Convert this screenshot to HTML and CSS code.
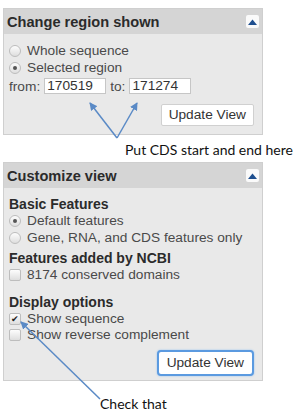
FILE: index.html
```html
<!DOCTYPE html>
<html lang="en">
<head>
    <meta charset="UTF-8">
    <meta name="viewport" content="width=device-width, initial-scale=1.0">
    <title>Sequence viewer settings</title>
    <link rel="stylesheet" href="styles.css">
</head>
<body>
    <div class="page">
        <section class="panel panel-region">
            <div class="panel-head">
                <h3>Change region shown</h3>
                <span class="toggle"><svg width="9" height="6" viewBox="0 0 9 6"><path d="M0 6 L4.5 0.5 L9 6 Z" fill="#1f4f8f"/></svg></span>
            </div>
            <div class="panel-body">
                <div class="opt"><span class="radio"></span>Whole sequence</div>
                <div class="opt"><span class="radio on"></span>Selected region</div>
                <div class="range">
                    from: <span class="field">170519</span>
                    to: <span class="field">171274</span>
                </div>
                <div class="actions"><span class="btn">Update View</span></div>
            </div>
        </section>

        <p class="note note-cds">Put CDS start and end here</p>

        <section class="panel panel-custom">
            <div class="panel-head">
                <h3>Customize view</h3>
                <span class="toggle"><svg width="9" height="6" viewBox="0 0 9 6"><path d="M0 6 L4.5 0.5 L9 6 Z" fill="#1f4f8f"/></svg></span>
            </div>
            <div class="panel-body">
                <h4>Basic Features</h4>
                <div class="opt"><span class="radio on"></span>Default features</div>
                <div class="opt"><span class="radio"></span>Gene, RNA, and CDS features only</div>

                <h4>Features added by NCBI</h4>
                <div class="opt"><span class="check"></span>8174 conserved domains</div>

                <h4 class="group-gap">Display options</h4>
                <div class="opt"><span class="check on">&#10004;</span>Show sequence</div>
                <div class="opt"><span class="check"></span>Show reverse complement</div>
                <div class="actions"><span class="btn btn-focus">Update View</span></div>
            </div>
        </section>

        <p class="note note-check">Check that</p>

        <!-- callout arrows drawn over the panels -->
        <svg class="arrows" width="298" height="419" viewBox="0 0 298 419">
            <defs>
                <marker id="head" markerWidth="8" markerHeight="8" refX="7" refY="4" orient="auto" markerUnits="userSpaceOnUse">
                    <path d="M0 0 L8 4 L0 8 Z" fill="#5a8ac6"/>
                </marker>
            </defs>
            <line x1="117" y1="138" x2="90" y2="103" stroke="#5a8ac6" stroke-width="1.5" marker-end="url(#head)"/>
            <line x1="117" y1="138" x2="137" y2="103" stroke="#5a8ac6" stroke-width="1.5" marker-end="url(#head)"/>
            <line x1="100" y1="399" x2="21" y2="322" stroke="#5a8ac6" stroke-width="1.5" marker-end="url(#head)"/>
        </svg>
    </div>
</body>
</html>
```

FILE: styles.css
```css
body {
    margin: 0;
    background: #fff;
    font-family: "Liberation Sans", Arial, sans-serif;
    color: #333;
}
.page {
    position: relative;
    width: 298px;
    height: 419px;
    padding: 8px 0 0 3px;
    box-sizing: border-box;
    overflow: hidden;
}
.panel {
    width: 260px;
    box-sizing: border-box;
    border: 1px solid #cfcfcf;
    background: #e9e9e9;
}
.panel-head {
    display: flex;
    align-items: center;
    justify-content: space-between;
    height: 25px;
    padding: 0 3px 0 3px;
    background: #d5d5d5;
}
.panel-head h3 {
    margin: 0;
    font-size: 14.6px;
    font-weight: bold;
    color: #2b2b2b;
}
.toggle {
    display: flex;
    align-items: center;
    justify-content: center;
    width: 13px;
    height: 13px;
    background: #fafafa;
    border-radius: 2px;
}
.panel-body {
    padding: 8px 5px 8px 5px;
    font-size: 13.7px;
}
.panel-custom .panel-body {
    padding-top: 7px;
    padding-bottom: 4px;
}
.panel-custom .opt {
    line-height: 16.5px;
}
.panel-body h4 {
    margin: 4px 0 0 0;
    font-size: 14px;
    line-height: 17px;
    font-weight: bold;
    color: #2b2b2b;
}
.panel-body h4:first-child {
    margin-top: 1px;
}
.panel-body h4.group-gap {
    margin-top: 10px;
}
.opt {
    display: flex;
    align-items: center;
    line-height: 17px;
    color: #4a4a4a;
}
.radio, .check {
    width: 12px;
    height: 12px;
    box-sizing: border-box;
    margin: 0 6px 0 0;
    border: 1px solid #bdbdbd;
    background: linear-gradient(#fdfdfd, #dedede);
    flex: none;
}
.radio {
    border-radius: 50%;
    display: flex;
    align-items: center;
    justify-content: center;
}
.radio.on::after {
    content: "";
    width: 4px;
    height: 4px;
    border-radius: 50%;
    background: #555;
}
.check {
    border-radius: 2px;
    font-size: 9px;
    line-height: 10px;
    text-align: center;
    color: #222;
}
.range {
    display: flex;
    align-items: center;
    gap: 4px;
    margin-top: 2px;
    color: #4a4a4a;
}
.field {
    display: inline-block;
    width: 62px;
    height: 16px;
    box-sizing: border-box;
    padding: 0 2px;
    background: #fff;
    border: 1px solid #c6c6c6;
    line-height: 14px;
    color: #333;
}
.actions {
    display: flex;
    justify-content: flex-end;
    margin-top: 10px;
    padding-right: 3px;
}
.panel-custom .actions {
    margin-top: 6px;
}
.btn {
    display: inline-block;
    padding: 2px 7px;
    background: #fff;
    border: 1px solid #d0d0d0;
    border-radius: 2px;
    line-height: 16px;
    color: #333;
}
.btn-focus {
    padding: 3px 8px;
    border: 2px solid #5b9ae0;
    border-radius: 4px;
    box-shadow: 0 0 2px #8fbef0;
}
.note {
    margin: 0;
    font-family: Lato, "Open Sans", sans-serif;
    font-size: 14px;
    color: #111;
}
.note-cds {
    padding: 7px 0 5px 122px;
    line-height: 15px;
}
.note-check {
    padding: 15px 0 0 97px;
    line-height: 16px;
}
.arrows {
    position: absolute;
    left: 0;
    top: 0;
    pointer-events: none;
}
```
